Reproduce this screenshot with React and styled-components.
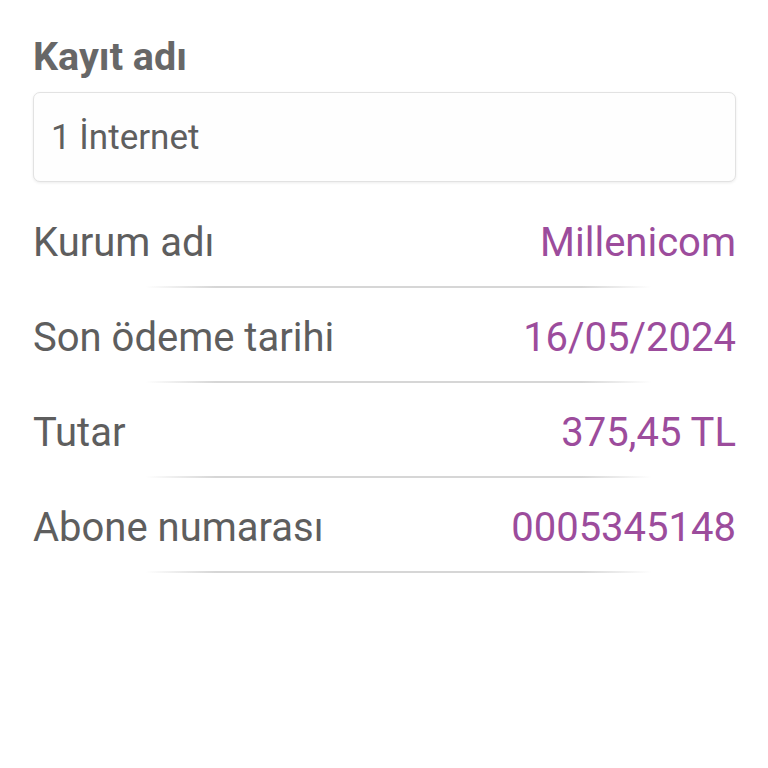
import React from "react";
import styled, { createGlobalStyle } from "styled-components";

const Global = createGlobalStyle`
  html, body { margin: 0; padding: 0; background: #ffffff; }
  body { font-family: Roboto, "Liberation Sans", sans-serif; }
`;

const Page = styled.div`
  padding: 34px 32px 0 33px;
  display: flex;
  flex-direction: column;
`;

const Title = styled.h2`
  margin: 0;
  font-size: 39.5px;
  line-height: 46px;
  font-weight: 700;
  color: #676767;
`;

const InputBox = styled.div`
  margin-top: 12px;
  height: 88px;
  border: 1px solid #e2e2e2;
  border-radius: 7px;
  box-shadow: 0 1px 3px rgba(0, 0, 0, 0.08);
  background: #fefefe;
  display: flex;
  align-items: center;
  padding-left: 17px;
  font-size: 35px;
  color: #5f5f5f;
`;

const List = styled.div`
  margin-top: 11px;
  display: flex;
  flex-direction: column;
`;

const Row = styled.div`
  display: flex;
  justify-content: space-between;
  align-items: center;
  padding: 27px 0 20px;
  font-size: 40px;
  line-height: 46px;
`;

const Label = styled.span`
  color: #5e5e5e;
`;

const Value = styled.span`
  color: #9c4c9c;
`;

const Divider = styled.div`
  height: 2px;
  background: linear-gradient(
    to right,
    rgba(214, 214, 214, 0) 16%,
    rgba(214, 214, 214, 1) 26%,
    rgba(214, 214, 214, 1) 78%,
    rgba(214, 214, 214, 0) 88%
  );
`;

const rows = [
  ["Kurum adı", "Millenicom"],
  ["Son ödeme tarihi", "16/05/2024"],
  ["Tutar", "375,45 TL"],
  ["Abone numarası", "0005345148"],
];

export default function App() {
  return (
    <>
      <Global />
      <Page>
        <Title>Kayıt adı</Title>
        <InputBox>1 İnternet</InputBox>
        <List>
          {rows.map(([l, v]) => (
            <React.Fragment key={l}>
              <Row>
                <Label>{l}</Label>
                <Value>{v}</Value>
              </Row>
              <Divider />
            </React.Fragment>
          ))}
        </List>
      </Page>
    </>
  );
}
